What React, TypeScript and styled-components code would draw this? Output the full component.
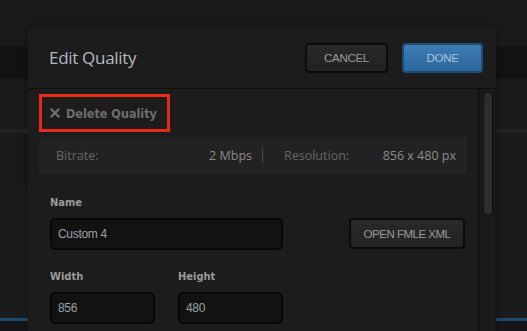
import React from 'react';
import styled, { createGlobalStyle } from 'styled-components';

const GlobalStyle = createGlobalStyle`
  html, body {
    margin: 0;
    padding: 0;
    background: #191919;
  }
  body {
    font-family: 'Open Sans', 'Noto Sans', sans-serif;
  }
`;

const tabs = [30, 135, 137, 137, 88];

const CloseIcon = () => (
  <svg width="10" height="10" viewBox="0 0 10 10">
    <path d="M1.5 1.5 L8.5 8.5 M8.5 1.5 L1.5 8.5" stroke="#707070" strokeWidth="2.2" strokeLinecap="square" />
  </svg>
);

const App = () => {
  return (
    <>
      <GlobalStyle />
      <Screen>
        <TabStrip>
          {tabs.map((w, i) => (
            <Tab key={i} width={w} active={i === tabs.length - 1} />
          ))}
        </TabStrip>
        <Band height={47} color="#1a1a1a" />
        <Band height={32} color="#121212" />
        <Band height={50} color="#1a1a1a" />
        <Band height={4} color="#222222" />
        <Band height={52} color="#191919" />
        <Band height={133} color="#1b1b1b" />
        <Band height={3} color="#1d4a6e" />
        <Band height={40} color="#161616" />

        <Modal>
          <Header>
            <Title>Edit Quality</Title>
            <HeaderActions>
              <ActionButton>CANCEL</ActionButton>
              <ActionButton primary>DONE</ActionButton>
            </HeaderActions>
          </Header>
          <Body>
            <Content>
              <DeleteLink>
                <CloseIcon />
                Delete Quality
              </DeleteLink>
              <InfoBar>
                <InfoHalf width={196}>
                  <InfoLabel>Bitrate:</InfoLabel>
                  <InfoValue>2 Mbps</InfoValue>
                </InfoHalf>
                <InfoDivider />
                <InfoHalf width={172}>
                  <InfoLabel>Resolution:</InfoLabel>
                  <InfoValue>856 x 480 px</InfoValue>
                </InfoHalf>
              </InfoBar>

              <FieldRow gap={66} top={22}>
                <Field>
                  <FieldLabel>Name</FieldLabel>
                  <TextBox width={233}>Custom 4</TextBox>
                </Field>
                <SideButton>OPEN FMLE XML</SideButton>
              </FieldRow>

              <FieldRow gap={23} top={20}>
                <Field>
                  <FieldLabel>Width</FieldLabel>
                  <TextBox width={105}>856</TextBox>
                </Field>
                <Field>
                  <FieldLabel>Height</FieldLabel>
                  <TextBox width={105}>480</TextBox>
                </Field>
              </FieldRow>
            </Content>
            <ScrollTrack>
              <ScrollThumb />
            </ScrollTrack>
          </Body>
        </Modal>
      </Screen>
    </>
  );
};

export default App;

const Screen = styled.div`
  position: relative;
  width: 527px;
  height: 331px;
  overflow: hidden;
  display: flex;
  flex-direction: column;
  background: #191919;
`;

const TabStrip = styled.div`
  display: flex;
  height: 3px;
  background: #0c0c0c;
`;

const Tab = styled.div<{ width: number; active?: boolean }>`
  width: ${(p) => p.width}px;
  border-right: 1px solid #2a2a2a;
  background: ${(p) => (p.active ? '#3a6f9c' : '#151515')};
  flex: ${(p) => (p.active ? 1 : 'none')};
`;

const Band = styled.div<{ height: number; color: string }>`
  height: ${(p) => p.height}px;
  background: ${(p) => p.color};
  flex: none;
`;

const Modal = styled.div`
  position: absolute;
  left: 28px;
  top: 26px;
  width: 468px;
  bottom: -10px;
  background: #1c1c1c;
  border-radius: 5px 5px 0 0;
  box-shadow: 0 0 6px rgba(0, 0, 0, 0.35);
  display: flex;
  flex-direction: column;
`;

const Header = styled.div`
  height: 62px;
  display: flex;
  align-items: center;
  justify-content: space-between;
  padding: 0 13px 0 21px;
  border-bottom: 1px solid #0f0f0f;
`;

const Title = styled.div`
  font-family: 'Open Sans', sans-serif;
  font-size: 17px;
  color: #b4b9be;
  letter-spacing: -0.3px;
`;

const HeaderActions = styled.div`
  display: flex;
  gap: 14px;
  margin-top: 1px;
`;

const ActionButton = styled.div<{ primary?: boolean }>`
  width: ${(p) => (p.primary ? 81 : 83)}px;
  height: 30px;
  box-sizing: border-box;
  display: flex;
  align-items: center;
  justify-content: center;
  border-radius: 4px;
  font-family: 'Liberation Sans', Arial, sans-serif;
  font-size: 11.5px;
  letter-spacing: -0.3px;
  color: ${(p) => (p.primary ? '#a9c3dc' : '#9a9a9a')};
  border: 2px solid ${(p) => (p.primary ? '#1d4c75' : '#0b0b0b')};
  background: ${(p) =>
    p.primary
      ? 'linear-gradient(#3d7cb4, #2c679c)'
      : 'linear-gradient(#282828, #222222)'};
`;

const Body = styled.div`
  flex: 1;
  display: flex;
  min-height: 0;
`;

const Content = styled.div`
  flex: 1;
  padding: 5px 11px 0 11px;
`;

const DeleteLink = styled.div`
  width: 131px;
  height: 38px;
  box-sizing: border-box;
  border: 3px solid #ea2a16;
  display: flex;
  align-items: center;
  padding-left: 8px;
  gap: 6px;
  font-family: 'DejaVu Sans Condensed', 'DejaVu Sans', sans-serif;
  font-weight: bold;
  font-size: 12.5px;
  color: #6e6e6e;
  white-space: pre;
`;

const InfoBar = styled.div`
  margin-top: 5px;
  width: 428px;
  height: 37px;
  background: #222222;
  display: flex;
  align-items: center;
  padding-left: 17px;
  box-sizing: border-box;
  font-size: 12.5px;
`;

const InfoHalf = styled.div<{ width: number }>`
  width: ${(p) => p.width}px;
  display: flex;
  justify-content: space-between;
`;

const InfoLabel = styled.span`
  color: #666666;
`;

const InfoValue = styled.span`
  color: #8c8c8c;
`;

const InfoDivider = styled.div`
  width: 1px;
  height: 15px;
  background: #4a4a4a;
  margin: 0 21px 0 10px;
`;

const FieldRow = styled.div<{ gap: number; top: number }>`
  display: flex;
  align-items: flex-end;
  gap: ${(p) => p.gap}px;
  padding-left: 11px;
  margin-top: ${(p) => p.top}px;
`;

const Field = styled.div`
  display: flex;
  flex-direction: column;
  gap: 9px;
`;

const FieldLabel = styled.div`
  font-family: 'DejaVu Sans Condensed', 'DejaVu Sans', sans-serif;
  font-weight: bold;
  font-size: 11px;
  color: #9a9a9a;
`;

const TextBox = styled.div<{ width: number }>`
  width: ${(p) => p.width}px;
  height: 32px;
  box-sizing: border-box;
  border: 2px solid #070707;
  border-radius: 5px;
  background: #121212;
  display: flex;
  align-items: center;
  padding-left: 6px;
  font-family: 'Liberation Sans', Arial, sans-serif;
  font-size: 12px;
  letter-spacing: -0.3px;
  color: #9aa0a6;
`;

const SideButton = styled.div`
  width: 116px;
  height: 31px;
  box-sizing: border-box;
  margin-bottom: 1px;
  border: 2px solid #0b0b0b;
  border-radius: 4px;
  background: linear-gradient(#292929, #232323);
  display: flex;
  align-items: center;
  justify-content: center;
  font-family: 'Liberation Sans', Arial, sans-serif;
  font-size: 11.5px;
  letter-spacing: -0.5px;
  color: #9a9a9a;
`;

const ScrollTrack = styled.div`
  width: 18px;
  border-left: 1px solid #0e0e0e;
  border-right: 1px solid #151515;
  background: #1a1a1a;
  padding: 3px 0 0 4px;
  box-sizing: border-box;
  flex: none;
`;

const ScrollThumb = styled.div`
  width: 10px;
  height: 124px;
  box-sizing: border-box;
  border: 1px solid #101010;
  border-radius: 5px;
  background: #2d2d2d;
`;
